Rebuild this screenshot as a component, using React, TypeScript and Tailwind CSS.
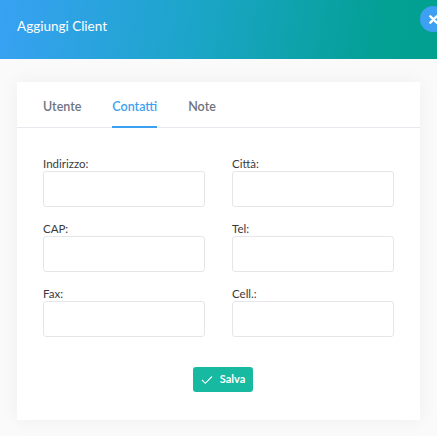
import React from "react";

const Field = ({ label }: { label: string }) => (
  <div className="flex flex-col">
    <label className="text-[11.5px] leading-[14px] pt-[4px] text-[#3a3a3a]">{label}</label>
    <input className="h-[36px] w-full rounded-[3px] border border-[#e6e6ea] bg-white outline-none" />
  </div>
);

export default function App() {
  return (
    <div className="w-[437px] h-[436px] overflow-hidden bg-[#fafafa]" style={{ fontFamily: 'Lato, "Noto Sans", sans-serif' }}>
      <div className="relative h-[59px] bg-[linear-gradient(100deg,#38a1f3_0%,#1ba5c8_45%,#04a096_85%,#00a08f_100%)] flex items-center pl-[17px]">
        <span className="text-white text-[13.5px] leading-none mt-[-5px]">Aggiungi Client</span>
        <div className="absolute left-[420px] top-[6px] w-[26px] h-[26px] rounded-full bg-[#3da0f2] flex items-center pl-[9px]">
          <svg width="9" height="9" viewBox="0 0 10 10"><path d="M1.5 1.5 L8.5 8.5 M8.5 1.5 L1.5 8.5" stroke="white" strokeWidth="2.6" strokeLinecap="round" /></svg>
        </div>
      </div>
      <div className="pt-[23px] px-[17px]">
        <div className="bg-white w-[403px] h-[338px] shadow-[0_0_18px_rgba(0,0,0,0.05)]">
          <div className="flex h-[46px] border-b border-[#e8e9ef] pl-[26px] gap-[31px]">
            <div className="flex items-center pt-[5px] text-[12.5px] font-semibold text-[#6e7380]">Utente</div>
            <div className="flex items-center pt-[6px] text-[12.5px] font-semibold text-[#3d9ff0] border-b-2 border-[#3d9ff0] mb-[-1px]">Contatti</div>
            <div className="flex items-center pt-[5px] text-[12.5px] font-semibold text-[#6e7380]">Note</div>
          </div>
          <div className="px-[26px] pt-[25px] grid grid-cols-2 gap-x-[27px] gap-y-[11px]">
            <Field label="Indirizzo:" />
            <Field label="Città:" />
            <Field label="CAP:" />
            <Field label="Tel:" />
            <Field label="Fax:" />
            <Field label="Cell.:" />
          </div>
          <div className="flex justify-center pt-[30px] pl-[9px]">
            <button className="w-[60px] h-[25px] rounded-[3px] bg-[#17b9a0] flex items-center justify-center gap-[7px] text-white text-[11px] font-bold">
              <svg width="12" height="10" viewBox="0 0 12 10"><path d="M1 5 L4.3 8.3 L11 1.5" stroke="white" strokeWidth="1.1" fill="none" /></svg>
              Salva
            </button>
          </div>
        </div>
      </div>
    </div>
  );
}
